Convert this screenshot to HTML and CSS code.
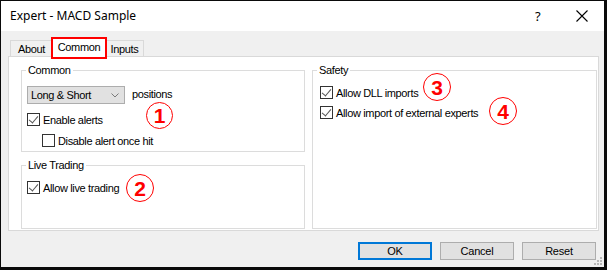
FILE: index.html
```html
<!DOCTYPE html>
<html>
<head>
<meta charset="utf-8">
<link rel="stylesheet" href="styles.css">
</head>
<body>
<div class="window">
  <div class="titlebar">
    <span class="title">Expert - MACD Sample</span>
    <span class="help">?</span>
    <svg class="close" width="12" height="12" viewBox="0 0 12 12"><path d="M0.5 0.5 L11.5 11.5 M11.5 0.5 L0.5 11.5" stroke="#000" stroke-width="1.1" fill="none"/></svg>
  </div>
  <div class="body">
    <div class="tabs">
      <div class="tab t-about">About</div>
      <div class="tab t-common active">Common</div>
      <div class="tab t-inputs">Inputs</div>
    </div>
    <div class="panel">
      <div class="col">
        <fieldset class="group g-common">
          <legend>Common</legend>
          <div class="row">
            <div class="select"><span>Long &amp; Short</span>
              <svg width="8" height="5" viewBox="0 0 8 5"><path d="M0.5 0.5 L4 4 L7.5 0.5" stroke="#7a7a7a" stroke-width="1" fill="none"/></svg>
            </div>
            <span class="after">positions</span>
          </div>
          <label class="check"><span class="box on"></span>Enable alerts</label>
          <label class="check indent"><span class="box"></span>Disable alert once hit</label>
        </fieldset>
        <fieldset class="group g-live">
          <legend>Live Trading</legend>
          <label class="check"><span class="box on"></span>Allow live trading</label>
        </fieldset>
      </div>
      <fieldset class="group g-safety">
        <legend>Safety</legend>
        <label class="check"><span class="box on"></span>Allow DLL imports</label>
        <label class="check"><span class="box on"></span>Allow import of external experts</label>
      </fieldset>
    </div>
    <div class="buttons">
      <button class="btn default">OK</button>
      <button class="btn">Cancel</button>
      <button class="btn">Reset</button>
    </div>
    <svg class="grip" width="9" height="9" viewBox="0 0 9 9">
      <rect x="6" y="0" width="2" height="2" fill="#b8b8b8"/>
      <rect x="3" y="3" width="2" height="2" fill="#b8b8b8"/>
      <rect x="6" y="3" width="2" height="2" fill="#b8b8b8"/>
      <rect x="0" y="6" width="2" height="2" fill="#b8b8b8"/>
      <rect x="3" y="6" width="2" height="2" fill="#b8b8b8"/>
      <rect x="6" y="6" width="2" height="2" fill="#b8b8b8"/>
    </svg>
  </div>
  <span class="mark m1">1</span>
  <span class="mark m2">2</span>
  <span class="mark m3">3</span>
  <span class="mark m4">4</span>
</div>
</body>
</html>
```
FILE: styles.css
```css
* { box-sizing: border-box; }
html, body { margin: 0; padding: 0; }
body {
  background: #0a0a0a;
  width: 607px;
  height: 270px;
  overflow: hidden;
  padding-top: 1px;
  padding-left: 1px;
}
.window {
  position: relative;
  width: 603px;
  height: 266px;
  display: flex;
  flex-direction: column;
  font-family: "Liberation Sans", Arial, sans-serif;
  font-size: 11px;
  letter-spacing: -0.35px;
  color: #000;
}
.titlebar {
  height: 30px;
  background: #fff;
  display: flex;
  align-items: center;
  padding-left: 9px;
  font-family: "Noto Sans", sans-serif;
  letter-spacing: 0;
}
.title { font-size: 12px; flex: 1; padding-bottom: 1px; }
.help { font-size: 13px; width: 40px; padding-left: 0; margin-right: 1px; }
.close { margin-right: 16px; margin-top: 0; }
.body {
  flex: 1;
  background: #f0f0f0;
  position: relative;
  display: flex;
  flex-direction: column;
}
.tabs {
  height: 25px;
  display: flex;
  align-items: flex-end;
  padding-left: 9px;
}
.tab {
  height: 16px;
  border: 1px solid #d9d9d9;
  border-bottom: none;
  background: #f0f0f0;
  text-align: center;
  line-height: 16px;
}
.t-about { width: 43px; }
.t-common { width: 52px; }
.t-inputs { width: 39px; }
.tab.active {
  height: 18px;
  margin-bottom: -1px;
  background: #fff;
  position: relative;
  z-index: 1;
  line-height: 14px;
  outline: 2px solid #ff0000;
  border-color: #fff;
}
.panel {
  margin-left: 7px;
  width: 591px;
  height: 175px;
  background: #fff;
  border: 1px solid #d9d9d9;
  display: grid;
  grid-template-columns: 284px 285px;
  column-gap: 7px;
  padding: 7px 1px 1px 12px;
}
.col { display: flex; flex-direction: column; gap: 7px; }
.group {
  margin: 0;
  border: 1px solid #dcdcdc;
  display: flex;
  flex-direction: column;
  min-width: 0;
}
.group legend {
  padding: 0 2px;
  margin-left: -1px;
  line-height: 13px;
}
.g-safety legend { margin-left: -3px; }
.g-common { height: 88px; padding: 9px 5px 0 5px; }
.g-live { flex: 1; padding: 9px 5px 0 5px; }
.g-safety { padding: 9px 5px 0 7px; }
.row { display: flex; align-items: center; }
.select {
  width: 98px;
  height: 18px;
  background: #e1e1e1;
  border: 1px solid #adadad;
  display: flex;
  align-items: center;
  justify-content: space-between;
  padding: 0 5px 0 3px;
}
.after { margin-left: 7px; margin-top: -2px; }
.check {
  display: flex;
  align-items: center;
  height: 13px;
  margin-top: 9px;
}
.g-common .check + .check { margin-top: 8px; }
.g-safety .check { margin-top: 0; }
.g-safety .check + .check { margin-top: 7px; }
.indent { margin-left: 15px; }
.box {
  width: 13px;
  height: 13px;
  border: 1px solid #333;
  background: #fff;
  margin-right: 3px;
  flex: none;
  position: relative;
}
.box.on::after {
  content: "";
  position: absolute;
  left: 3px;
  top: 0px;
  width: 4px;
  height: 8px;
  border-right: 1.5px solid #555;
  border-bottom: 1.5px solid #555;
  transform: rotate(40deg);
}
.g-live .check { margin-top: 0; }
.buttons {
  display: flex;
  justify-content: flex-end;
  gap: 8px;
  padding-right: 8px;
  margin-top: 11px;
}
.btn {
  width: 74px;
  height: 18px;
  background: #e1e1e1;
  border: 1px solid #adadad;
  font-family: "Liberation Sans", Arial, sans-serif;
  font-size: 11px;
  letter-spacing: -0.2px;
  padding: 0;
  color: #000;
}
.btn.default { border: 2px solid #0078d7; }
.grip { position: absolute; right: 1px; bottom: 1px; }
.mark {
  position: absolute;
  width: 28px;
  height: 28px;
  border: 1.5px solid #ff0000;
  border-radius: 50%;
  color: #ff0000;
  font-family: "Liberation Sans", Arial, sans-serif;
  font-weight: bold;
  font-size: 21px;
  letter-spacing: 0;
  display: flex;
  align-items: center;
  justify-content: center;
  background: #fff;
  padding-top: 1px;
}
.m1 { left: 145px; top: 101px; width: 27px; height: 27px; }
.m2 { left: 125px; top: 173px; }
.m3 { left: 422px; top: 72px; }
.m4 { left: 488px; top: 96px; }
```
